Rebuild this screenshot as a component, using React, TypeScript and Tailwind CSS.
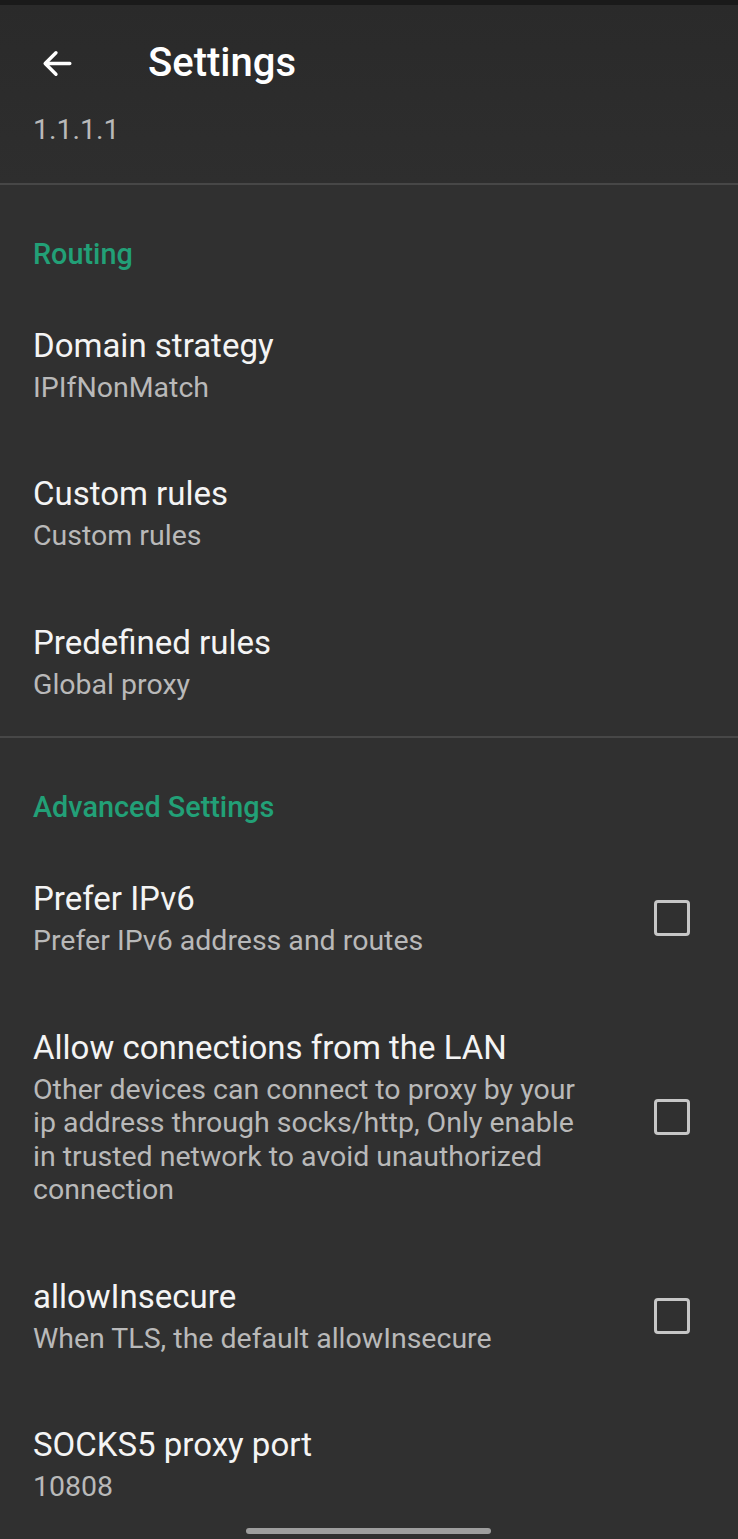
import React from "react";

type Pref = {
  title: string;
  summary: string;
  checkbox?: boolean;
};

const routing: Pref[] = [
  { title: "Domain strategy", summary: "IPIfNonMatch" },
  { title: "Custom rules", summary: "Custom rules" },
  { title: "Predefined rules", summary: "Global proxy" },
];

const advanced: Pref[] = [
  { title: "Prefer IPv6", summary: "Prefer IPv6 address and routes", checkbox: true },
  {
    title: "Allow connections from the LAN",
    summary:
      "Other devices can connect to proxy by your ip address through socks/http, Only enable in trusted network to avoid unauthorized connection",
    checkbox: true,
  },
  { title: "allowInsecure", summary: "When TLS, the default allowInsecure", checkbox: true },
  { title: "SOCKS5 proxy port", summary: "10808" },
];

const Divider = () => <div className="h-[2px] bg-[#474747]" />;

const Category = ({ label }: { label: string }) => (
  <div className="px-[33px] pt-[53px] pb-[20px] text-[28.8px] leading-[33px] font-medium text-[#22a077]">
    {label}
  </div>
);

const PrefRow = ({ item }: { item: Pref }) => (
  <div className="flex items-center pl-[33px] pr-[48px] py-[35px]">
    <div className="flex-1 min-w-0">
      <div className="text-[33px] leading-[40px] text-[#f4f4f4]">{item.title}</div>
      <div className="mt-[5px] text-[28.5px] leading-[33.5px] text-[#b9b9b9]">{item.summary}</div>
    </div>
    {item.checkbox && (
      <div className="ml-[61px] w-[36px] h-[36px] rounded-[4px] border-[3px] border-[#c6c6c6]" />
    )}
  </div>
);

export default function App() {
  return (
    <div
      className="relative w-[738px] h-[1539px] overflow-hidden bg-[#303030]"
      style={{ fontFamily: "Roboto, 'Noto Sans', sans-serif" }}
    >
      <div className="h-[5px] bg-[#1a1a1a]" />
      <div className="bg-gradient-to-b from-[#2a2a2a] to-[#2e2e2e]">
        {/* toolbar */}
        <div className="flex items-center h-[105px] pt-[11px]">
          <div className="w-[148px] pl-[39px] flex items-center">
            <svg width="37" height="37" viewBox="0 0 24 24" fill="none">
              <path
                d="M20 12H4.5M11 5l-7 7 7 7"
                stroke="#ffffff"
                strokeWidth="2.2"
                strokeLinecap="round"
                strokeLinejoin="round"
              />
            </svg>
          </div>
          <div className="text-[40px] font-medium text-white leading-[44px]">Settings</div>
        </div>
        {/* partially scrolled item */}
        <div className="px-[33px] pt-[3px] pb-[36px] text-[28.5px] leading-[33.5px] text-[#b9b9b9]">
          1.1.1.1
        </div>
      </div>
      <Divider />
      <Category label="Routing" />
      {routing.map((p) => (
        <PrefRow key={p.title} item={p} />
      ))}
      <Divider />
      <Category label="Advanced Settings" />
      {advanced.map((p) => (
        <PrefRow key={p.title} item={p} />
      ))}
      {/* gesture handle */}
      <div className="absolute left-[246px] bottom-[5px] w-[245px] h-[6px] rounded-full bg-[#9e9e9e]" />
    </div>
  );
}
